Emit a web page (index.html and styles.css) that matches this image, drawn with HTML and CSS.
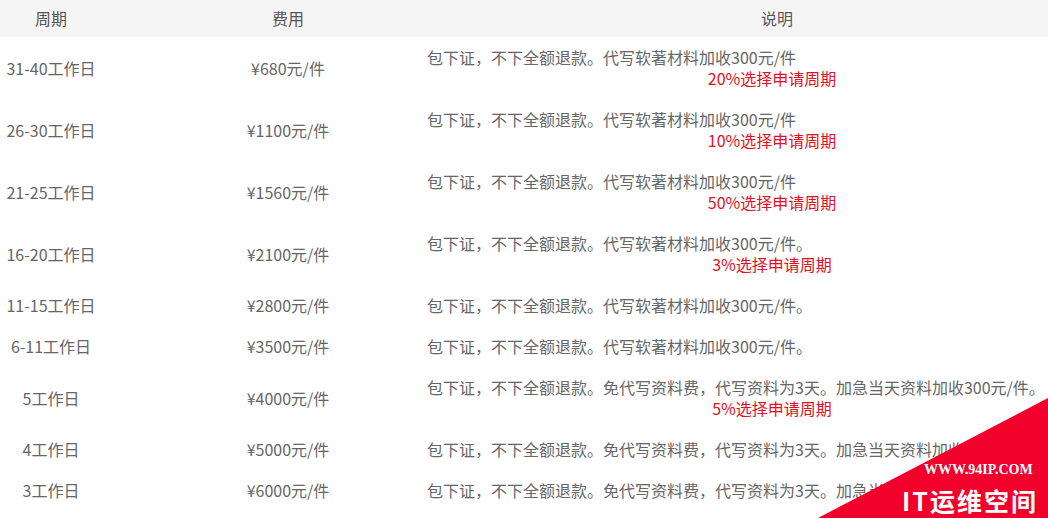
FILE: index.html
```html
<!DOCTYPE html>
<html lang="zh-CN">
<head>
<meta charset="utf-8">
<title>软著价格</title>
<link rel="stylesheet" href="styles.css">
</head>
<body>
<div class="table">
  <div class="row head">
    <div class="c1">周期</div>
    <div class="c2">费用</div>
    <div class="c3 hc3">说明</div>
  </div>
  <div class="row">
    <div class="c1">31-40工作日</div>
    <div class="c2">¥680元/件</div>
    <div class="c3"><span class="line">包下证，不下全额退款。代写软著材料加收300元/件</span><span class="red">20%选择申请周期</span></div>
  </div>
  <div class="row">
    <div class="c1">26-30工作日</div>
    <div class="c2">¥1100元/件</div>
    <div class="c3"><span class="line">包下证，不下全额退款。代写软著材料加收300元/件</span><span class="red">10%选择申请周期</span></div>
  </div>
  <div class="row">
    <div class="c1">21-25工作日</div>
    <div class="c2">¥1560元/件</div>
    <div class="c3"><span class="line">包下证，不下全额退款。代写软著材料加收300元/件</span><span class="red">50%选择申请周期</span></div>
  </div>
  <div class="row">
    <div class="c1">16-20工作日</div>
    <div class="c2">¥2100元/件</div>
    <div class="c3"><span class="line">包下证，不下全额退款。代写软著材料加收300元/件。</span><span class="red">3%选择申请周期</span></div>
  </div>
  <div class="row">
    <div class="c1">11-15工作日</div>
    <div class="c2">¥2800元/件</div>
    <div class="c3"><span class="line">包下证，不下全额退款。代写软著材料加收300元/件。</span></div>
  </div>
  <div class="row">
    <div class="c1">6-11工作日</div>
    <div class="c2">¥3500元/件</div>
    <div class="c3"><span class="line">包下证，不下全额退款。代写软著材料加收300元/件。</span></div>
  </div>
  <div class="row">
    <div class="c1">5工作日</div>
    <div class="c2">¥4000元/件</div>
    <div class="c3"><span class="line">包下证，不下全额退款。免代写资料费，代写资料为3天。加急当天资料加收300元/件。</span><span class="red">5%选择申请周期</span></div>
  </div>
  <div class="row">
    <div class="c1">4工作日</div>
    <div class="c2">¥5000元/件</div>
    <div class="c3"><span class="line">包下证，不下全额退款。免代写资料费，代写资料为3天。加急当天资料加收300元/件。</span></div>
  </div>
  <div class="row">
    <div class="c1">3工作日</div>
    <div class="c2">¥6000元/件</div>
    <div class="c3"><span class="line">包下证，不下全额退款。免代写资料费，代写资料为3天。加急当天资料加收300元/件。</span></div>
  </div>
</div>
<div class="badge">
  <svg class="tri" width="230" height="120" viewBox="0 0 230 120"><polygon points="0,120 230,0 230,120" fill="#f2002c"/></svg>
  <div class="badge-url">WWW.94IP.COM</div>
  <div class="badge-name">IT运维空间</div>
</div>
</body>
</html>
```
FILE: styles.css
```css
html, body {
  margin: 0;
  padding: 0;
  background: #fff;
  overflow: hidden;
}
body {
  width: 1048px;
  height: 518px;
  position: relative;
  font-family: "Noto Sans CJK SC", "Noto Sans", sans-serif;
  font-size: 16px;
  color: #666;
}
.table {
  display: flex;
  flex-direction: column;
}
.row {
  display: grid;
  grid-template-columns: 102px 318px 1fr;
  align-items: center;
  padding: 10px 0;
  line-height: 21px;
  white-space: nowrap;
}
.row.head {
  height: 37px;
  box-sizing: border-box;
  padding: 0;
  background: #f5f5f5;
  color: #555;
}
.c1 {
  text-align: center;
}
.c2 {
  text-align: center;
  padding-left: 54px;
}
.c3 {
  padding-left: 7px;
  display: flex;
  flex-direction: column;
  min-width: 0;
}
.hc3 {
  padding-left: 86px;
  text-align: center;
}
.line {
  display: block;
}
.red {
  display: block;
  color: #e50f1f;
  text-align: center;
  padding-left: 69px;
}
.badge {
  position: absolute;
  right: 0;
  bottom: 0;
  width: 230px;
  height: 120px;
}
.tri {
  position: absolute;
  left: 0;
  top: 0;
  display: block;
}
.badge-url {
  position: absolute;
  left: 106px;
  top: 64px;
  font-family: "Liberation Serif", "DejaVu Serif", serif;
  font-weight: bold;
  font-size: 14px;
  line-height: 16px;
  color: #fff;
  white-space: nowrap;
}
.badge-name {
  position: absolute;
  left: 84px;
  top: 88px;
  font-family: "Noto Sans CJK SC", sans-serif;
  font-weight: bold;
  font-size: 25px;
  line-height: 28px;
  letter-spacing: 2px;
  color: #fff;
  white-space: nowrap;
}
```
